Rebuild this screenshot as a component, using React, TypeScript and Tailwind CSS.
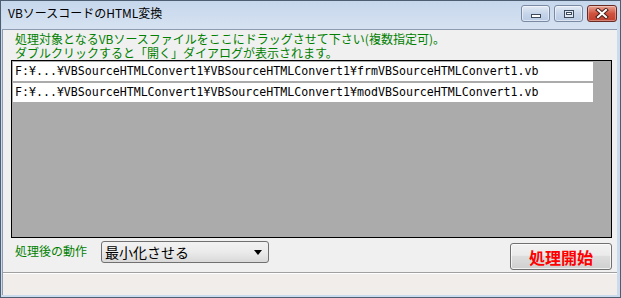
import React from "react";

const jp = { fontFamily: '"Noto Sans CJK JP", "Noto Sans", sans-serif' };
const mono = { fontFamily: '"DejaVu Sans Mono", "Liberation Mono", monospace' };

function TitleButton({ kind }: { kind: "min" | "max" | "close" }) {
  if (kind === "close") {
    return (
      <div className="w-[30px] h-[17px] rounded-[3px] border border-[#6b2a22] bg-gradient-to-b from-[#e8a394] via-[#d0533f] to-[#c0402e] flex items-center justify-center shadow-[inset_0_0_0_1px_rgba(255,255,255,0.35)]">
        <svg width="14" height="11" viewBox="0 0 14 11">
          <path d="M3 2 L11 9 M11 2 L3 9" stroke="#4a1f1a" strokeWidth="4" strokeLinecap="square" />
          <path d="M3 2 L11 9 M11 2 L3 9" stroke="#ffffff" strokeWidth="2" strokeLinecap="square" />
        </svg>
      </div>
    );
  }
  return (
    <div className="w-[29px] h-[17px] rounded-[3px] border border-[#7a8aa3] bg-gradient-to-b from-[#e3ebf5] via-[#c6d5e9] to-[#b9cbe4] flex items-center justify-center shadow-[inset_0_0_0_1px_rgba(255,255,255,0.5)]">
      {kind === "min" ? (
        <div className="w-[10px] h-[4px] mt-[5px] border border-[#3d4a5c] bg-white" />
      ) : (
        <div className="w-[10px] h-[8px] border border-[#3d4a5c] bg-[#dfe7f2] flex items-center justify-center">
          <div className="w-[6px] h-[3px] border border-[#3d4a5c] bg-white" />
        </div>
      )}
    </div>
  );
}

export default function App() {
  const files = [
    "F:¥...¥VBSourceHTMLConvert1¥VBSourceHTMLConvert1¥frmVBSourceHTMLConvert1.vb",
    "F:¥...¥VBSourceHTMLConvert1¥VBSourceHTMLConvert1¥modVBSourceHTMLConvert1.vb",
  ];
  return (
    <div className="w-[621px] h-[298px] overflow-hidden bg-white">
      <div className="w-[621px] h-[298px] border border-[#4d5d72] bg-[#cbdbee] flex flex-col pl-[1px] pr-[3px] pb-[2px]">
        {/* Title bar */}
        <div className="h-[28px] flex items-start bg-gradient-to-b from-[#c6d7ec] to-[#d6e2f1] pl-[6px]">
          <div className="pt-[5px] text-[12px] leading-[14px] text-black" style={jp}>
            VBソースコードのHTML変換
          </div>
          <div className="ml-auto flex gap-[4px] pt-[4px]">
            <TitleButton kind="min" />
            <TitleButton kind="max" />
            <TitleButton kind="close" />
          </div>
        </div>
        {/* Client area */}
        <div className="flex-1 flex flex-col bg-[#f0f0f0] border-l border-t border-[#8e9bb0]">
          <div className="pt-[2px] pl-[12px] text-[12px] leading-[14px] text-[#008000]" style={jp}>
            <div>処理対象となるVBソースファイルをここにドラッグさせて下さい(複数指定可)。</div>
            <div>ダブルクリックすると「開く」ダイアログが表示されます。</div>
          </div>
          <div className="ml-[8px] mr-[5px] h-[178px] border border-black bg-[#ababab] p-[1px] flex flex-col gap-[2px]">
            {files.map((f) => (
              <div
                key={f}
                className="w-[580px] h-[19px] bg-white pl-[2px] flex items-center text-[11.6px] text-black whitespace-nowrap"
                style={mono}
              >
                {f}
              </div>
            ))}
          </div>
          <div className="flex items-start ml-[12px] mr-[5px] mt-[3px] h-[31px]">
            <div className="mt-[3px] text-[12px] leading-[14px] text-[#008000]" style={jp}>
              処理後の動作
            </div>
            <div className="ml-[14px] w-[168px] h-[22px] rounded-[3px] border border-[#707070] bg-gradient-to-b from-[#f2f2f2] via-[#ebebeb] to-[#d9d9d9] flex items-center pl-[3px] pr-[6px]">
              <span className="text-[14px] leading-[16px] text-black" style={jp}>
                最小化させる
              </span>
              <svg className="ml-auto" width="8" height="5" viewBox="0 0 8 5">
                <path d="M0 0 H8 L4 5 Z" fill="#000" />
              </svg>
            </div>
            <div className="ml-auto mt-[2px] w-[102px] h-[27px] rounded-[3px] border border-[#707070] bg-[linear-gradient(to_bottom,#f2f2f2_0%,#ebebeb_45%,#dddddd_50%,#cfcfcf_100%)] flex items-center justify-center shadow-[inset_0_0_0_1px_rgba(255,255,255,0.7)]">
              <span className="text-[16px] leading-[18px] font-bold text-[#ff0000]" style={jp}>
                処理開始
              </span>
            </div>
          </div>
          <div className="flex-1 border-t border-[#a0a0a0] bg-[#f0edeb] shadow-[inset_0_1px_0_#ffffff]" />
        </div>
      </div>
    </div>
  );
}
